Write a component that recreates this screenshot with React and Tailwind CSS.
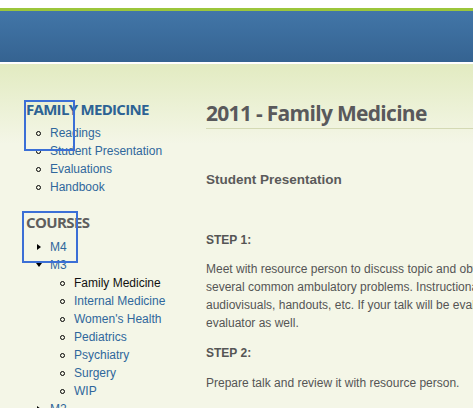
export default function App() {
  const familyLinks = ["Readings", "Student Presentation", "Evaluations", "Handbook"];
  const m3Courses = [
    { name: "Family Medicine", current: true },
    { name: "Internal Medicine" },
    { name: "Women's Health" },
    { name: "Pediatrics" },
    { name: "Psychiatry" },
    { name: "Surgery" },
    { name: "WIP" },
  ];

  return (
    <div className="relative h-screen w-full overflow-hidden bg-[#f4f6e7] font-['Liberation_Sans',Arial,sans-serif]">
      {/* HEADER */}
      <div className="h-2 bg-white" />
      <div className="h-[3px] bg-[#9cc63b]" />
      <div className="h-[51px] bg-linear-to-b from-[#4276a8] to-[#356391]" />
      <div className="h-[2px] bg-white" />

      {/* CONTENT */}
      <div className="flex pl-[26px] pt-[36px] bg-[linear-gradient(to_bottom,#e2ebc1,#f4f6e7_80px)]">
        {/* SIDEBAR */}
        <div className="w-[180px] shrink-0">
          <h2 className="font-['Open_Sans',sans-serif] text-[15px] font-bold leading-[18px] tracking-[-0.7px] text-[#2d6394]">
            FAMILY MEDICINE
          </h2>
          <ul className="mt-[6px]">
            {familyLinks.map((item) => (
              <li key={item} className="flex h-[18px] items-center text-[12px] leading-[18px] text-[#2f679c]">
                <span className="ml-[10px] mr-[9px] mt-[1px] h-[5px] w-[5px] rounded-full border border-black" />
                {item}
              </li>
            ))}
          </ul>

          <h2 className="mt-[17px] font-['Open_Sans',sans-serif] text-[15px] font-bold leading-[18px] tracking-[-0.6px] text-[#5e5e5e]">
            COURSES
          </h2>
          <ul className="mt-[7px] text-[12px] leading-[18px] text-[#2f679c]">
            <li className="flex h-[18px] items-center">
              <span className="ml-[11px] mr-[9px] h-0 w-0 border-y-[3px] border-l-[4px] border-y-transparent border-l-black" />
              M4
            </li>
            <li>
              <div className="flex h-[18px] items-center">
                <span className="ml-[10px] mr-[8px] h-0 w-0 border-x-[3px] border-t-[4px] border-x-transparent border-t-black" />
                M3
              </div>
              <ul>
                {m3Courses.map((c) => (
                  <li
                    key={c.name}
                    className={`flex h-[18px] items-center ${c.current ? "text-[#111]" : "text-[#2f679c]"}`}
                  >
                    <span className="ml-[34px] mr-[9px] mt-[1px] h-[5px] w-[5px] rounded-full border border-black" />
                    {c.name}
                  </li>
                ))}
              </ul>
            </li>
            <li className="flex h-[18px] items-center">
              <span className="ml-[11px] mr-[9px] h-0 w-0 border-y-[3px] border-l-[4px] border-y-transparent border-l-black" />
              M2
            </li>
          </ul>
        </div>

        {/* MAIN */}
        <div className="w-[620px] shrink-0 text-[#555]">
          <h1 className="border-b border-[#d4d9b4] pb-[2px] font-['Open_Sans',sans-serif] text-[21px] font-bold leading-[26px] tracking-[-0.7px] text-[#59595b]">
            2011 - Family Medicine
          </h1>

          <h3 className="mt-[42px] text-[13.5px] font-bold leading-[18px] text-[#5a5a5a]">
            Student Presentation
          </h3>

          <h4 className="mt-[42px] text-[12px] font-bold leading-[18px]">STEP 1:</h4>
          <p className="mt-[11px] text-[12px] leading-[18px]">
            Meet with resource person to discuss topic and obtain relevant references. Talks should cover
            <br />
            several common ambulatory problems. Instructional methods may include case discussion,
            <br />
            audiovisuals, handouts, etc. If your talk will be evaluated, please make arrangements with the
            <br />
            evaluator as well.
          </p>

          <h4 className="mt-[12px] text-[12px] font-bold leading-[18px]">STEP 2:</h4>
          <p className="mt-3 text-[12px] leading-[18px]">Prepare talk and review it with resource person.</p>
        </div>
      </div>

      {/* ANNOTATION BOXES */}
      <div className="absolute left-[24px] top-[100px] h-[51px] w-[51px] border-2 border-[#3b6fd6]" />
      <div className="absolute left-[22px] top-[211px] h-[52px] w-[56px] border-2 border-[#3b6fd6]" />
    </div>
  );
}
